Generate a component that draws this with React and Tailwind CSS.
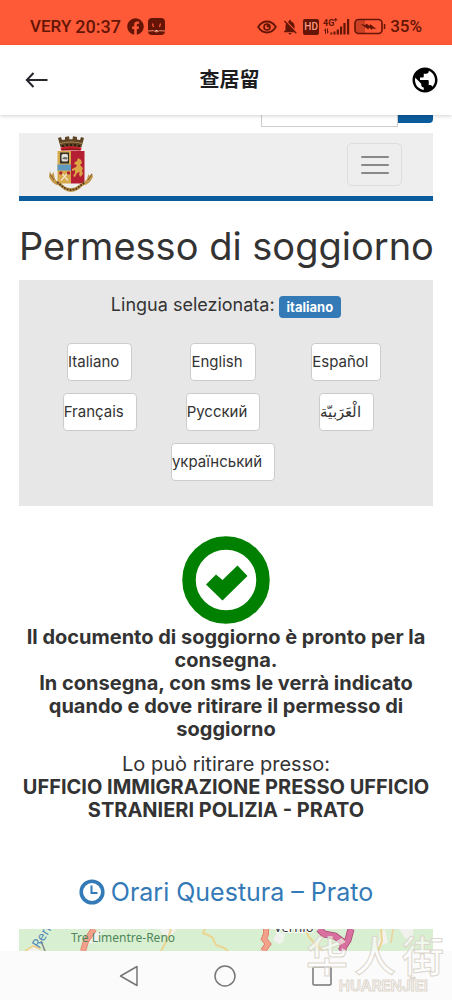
import { FaFacebook } from "react-icons/fa";
import { MdPublic, MdNotificationsOff } from "react-icons/md";

const languages = [
  { code: "it", label: "Italiano" },
  { code: "en", label: "English" },
  { code: "es", label: "Español" },
  { code: "fr", label: "Français" },
  { code: "ru", label: "Русский" },
  { code: "ar", label: "الْعَرَبيّة" },
  { code: "uk", label: "український", wide: true },
];

function StatusBar() {
  return (
    <div className="flex h-[45px] shrink-0 items-center justify-between bg-[#ff5a37] pt-2 pr-[30px] pl-[30px] font-[Roboto,sans-serif] font-medium text-[#641505]">
      <div className="flex items-center gap-1">
        <span className="text-[17px]">VERY</span>
        <span className="text-lg">20:37</span>
        <FaFacebook className="ml-0.5 h-[17px] w-[17px]" />
        <svg viewBox="0 0 17 17" className="h-[17px] w-[17px]">
          <rect width="17" height="17" rx="4" fill="currentColor" />
          <path d="M4.500 5.500l1 3.500M12.500 5.500l-1 3.500" stroke="#ff5a37" strokeWidth="1.200" />
          <path d="M0 13l5.500-.3 3 1.300 3-1.300 5.500.3" stroke="#ff8b70" strokeWidth="1" fill="none" />
          <path d="M7 12h3l-1.500 1.500z" fill="#ffd8cc" />
        </svg>
      </div>
      <div className="flex items-center gap-1">
        <svg viewBox="0 0 20 14" className="h-[14px] w-[20px]" fill="none" stroke="currentColor">
          <path d="M1.200 7C3.500 3.200 6.500 1.500 10 1.500S16.500 3.200 18.800 7C16.500 10.800 13.500 12.500 10 12.500S3.500 10.800 1.200 7z" strokeWidth="1.800" />
          <circle cx="10" cy="7" r="3" strokeWidth="1.600" />
          <circle cx="11" cy="6" r="1.500" fill="currentColor" stroke="none" />
        </svg>
        <MdNotificationsOff className="h-[18px] w-[18px]" />
        <span className="flex h-4 w-4 items-center justify-center rounded-xs bg-[#641505] text-[10px] text-[#ff9a82]">HD</span>
        <svg viewBox="0 0 27 17" className="h-[17px] w-[27px]" fill="currentColor">
          <text x="0" y="7.500" fontSize="9" fontWeight="700" textAnchor="start">4G</text>
          <path d="M12.200 0h1v1.200h1.200v1h-1.200v1.200h-1V2.200H11v-1h1.200z" />
          <path d="M1 12.500l2-2.500v6H2v-3zM4 10.500h1v3h1l-2 2.500zM7.500 14.500h1.800v2H7.500zM10.500 13.500h2v3h-2zM13.700 11.500h2.200v5h-2.200zM17 8.500h2.200v8H17zM20.400 5h2.200v11.500h-2.200zM24 1h2.200v15.500H24z" />
        </svg>
        <svg viewBox="0 0 32 17" className="h-[17px] w-[32px]">
          <path d="M4 2h7v13H4a3 3 0 01-3-3V5a3 3 0 013-3z" fill="#cf4124" />
          <rect x="1" y="1.500" width="27" height="14" rx="3.500" fill="none" stroke="currentColor" strokeWidth="1.600" />
          <path d="M29.800 6h1.500v5h-1.500z" fill="currentColor" />
          <path d="M6.500 6l5 1 1-1.500 3 2.500.5-2 6.500 5-4-.5-.5 1.500-3-2.500-.5 2z" fill="currentColor" />
        </svg>
        <span className="text-[17px]">35%</span>
      </div>
    </div>
  );
}

function TitleBar() {
  return (
    <header className="relative z-10 flex h-[70px] shrink-0 items-center justify-between bg-white pr-3 pl-[25px] shadow-[0_1px_4px_rgba(0,0,0,0.18)]">
      <button type="button" aria-label="Back" className="text-[#26262c]">
        <svg viewBox="0 0 24 18" className="h-[18px] w-6" fill="none" stroke="currentColor" strokeWidth="2">
          <path d="M22.500 9H2M8.500 2L1.800 9l6.700 7" />
        </svg>
      </button>
      <h1 className="text-xl font-bold text-[#1d1d1f]">查居留</h1>
      <button type="button" aria-label="Language" className="text-black">
        <MdPublic className="h-[30px] w-[30px]" />
      </button>
    </header>
  );
}

function Crest() {
  return (
    <svg viewBox="0 0 46 58" className="h-[58px] w-[46px]" role="img" aria-label="Polizia di Stato">
      {/* Mural crown */}
      <path d="M10 2l3-1 1 3 3-.5V1l4-.8.500 3h3l.5-3 4 .8v2.500l3 .5 1-3 3 1-2.500 9H12.500z" fill="#5f4426" />
      <path d="M12 7.500q11-3 22.500 0" stroke="#b09050" strokeWidth="1.200" fill="none" />
      <path d="M15 9v2M19 8v2.500M23 8v2.500M27 8v2.500M31 9v2" stroke="#21160d" strokeWidth="1.500" />
      <path d="M12.500 11.500q10.500-2.500 21 0l-.5 3H13z" fill="#c3202b" />
      <path d="M14 13.800q9-1.500 18 0" stroke="#7a1518" strokeWidth="1" fill="none" />
      {/* Shield */}
      <path d="M9.500 15H23v32.500H11.500q-2 0-2-2z" fill="#d8a94c" />
      <path d="M23 15h13.500v30.500q0 2-2 2H23z" fill="#b51f33" />
      <path d="M9.500 28.500H23v6H9.500z" fill="#5f9bc0" />
      <rect x="12" y="16.500" width="9" height="11" fill="#33302a" />
      <rect x="13.500" y="18" width="6.500" height="7.500" rx="1.500" fill="#e4e0d5" />
      <path d="M14 23l2-2 4 .5-1 2z" fill="#6a6a68" />
      <path d="M12 36l2.500 2L20 44.500M21.500 36L19 38l-6 6.500" stroke="#efe4c4" strokeWidth="1.300" fill="none" />
      <circle cx="12.800" cy="37" r="1.700" fill="#a8272a" />
      <circle cx="20.500" cy="37" r="1.700" fill="#a8272a" />
      <path d="M30 22l3 2 1 3-2 2 3 3-1 3 1 3-3 3-1-3 1-2-3 1-2 4-2-1 2-3v-3l-3 1v-2l4-2 1-2-3-1 1-2 2-1z" fill="#dda544" />
      {/* Ribbon */}
      <path d="M1 41q4 8 10 8.500Q17 56 23 56t12-6.500q6-.5 10-8.500l-1-4-2.500 3-1-2-1.500 5q-3 4-6 4-4 5-10 5t-10-5q-3 0-6-4L5.500 36l-2 3L2 35z" fill="#c59a4c" />
      <path d="M9 46l5 4 4 3 5 1 5-1 4-3 5-4" stroke="#59411f" strokeWidth="2" strokeDasharray="2 1" fill="none" />
      <path d="M2 38l4 6M44 38l-4 6" stroke="#7a5b2c" strokeWidth="1" />
    </svg>
  );
}

function Navbar() {
  return (
    <div className="mt-1.5 flex h-[68px] items-center justify-between border-b-[5px] border-[#0b5c9c] bg-[#eeeeee] pr-[31px] pl-[29px]">
      <a href="#home">
        <Crest />
      </a>
      <button
        type="button"
        aria-label="Menu"
        className="flex h-[43px] w-[55px] flex-col items-center justify-center gap-[6px] rounded-[5px] border border-[#dddddd]"
      >
        <span className="h-0.5 w-7 rounded-sm bg-[#888888]" />
        <span className="h-0.5 w-7 rounded-sm bg-[#888888]" />
        <span className="h-0.5 w-7 rounded-sm bg-[#888888]" />
      </button>
    </div>
  );
}

function LanguagePanel() {
  return (
    <section className="mt-3 bg-[#e7e7e7] pt-3 pr-[25px] pb-[25px] pl-[19px]">
      <p className="flex items-center justify-center gap-1 pl-1.5 text-lg leading-6">
        Lingua selezionata:
        <span className="mt-1 rounded bg-[#337ab7] px-2 text-[13px] leading-[22px] font-bold text-white">italiano</span>
      </p>
      <div className="mt-[25px] grid grid-cols-3 justify-items-center gap-y-3">
        {languages.map((lang) => (
          <button
            key={lang.code}
            type="button"
            lang={lang.code}
            className={`h-[38px] rounded border border-[#cccccc] bg-white pr-3 text-[15px] ${lang.wide ? "col-span-3" : ""}`}
          >
            {lang.label}
          </button>
        ))}
      </div>
    </section>
  );
}

function PermitStatus() {
  return (
    <section className="mt-[30px] text-center text-xl leading-[23px]">
      <svg viewBox="0 0 88 88" className="mx-auto h-[88px] w-[88px]" role="img" aria-label="Pronto">
        <circle cx="44" cy="44" r="37" fill="none" stroke="#008000" strokeWidth="13.500" />
        <path d="M24 48.500l10-10 6.500 5.500 15-14.500 10 10.500-25 24.500z" fill="#008000" />
      </svg>
      <p className="mt-0.5 font-bold">
        Il documento di soggiorno è pronto per la consegna.
        <br />
        In consegna, con sms le verrà indicato quando e dove ritirare il permesso di soggiorno
      </p>
      <p className="mt-3">
        Lo può ritirare presso:
        <br />
        <strong>UFFICIO IMMIGRAZIONE PRESSO UFFICIO STRANIERI POLIZIA - PRATO</strong>
      </p>
    </section>
  );
}

function OfficeMap() {
  return (
    <svg viewBox="0 0 414 44" className="mt-[21px] w-full bg-[#d8f0d1]" role="img" aria-label="Mappa">
      <path d="M85 0l-6 10 4 1-7 3-8 0 6-9zM140 0h18l-8 9-6-3zM22 22l-8-6-8 6zM258 3l8 2-2 8-4 2-6-4zM360 4l6-4 3 14-12 4 4-9zM380 0h14v11l-8-2z" fill="#f1f1ee" />
      <path d="M6 22l8-5 8 3M152 0l-3 9-7 13M186 0l-2 4 9 4 4 8 8 3 4 3M286 0l4 8 8 9 6 5M362 0l1 12-4 10" stroke="#ecd491" strokeWidth="2" fill="none" />
      <path d="M374 0l-2 14" stroke="#efcf9b" strokeWidth="1.500" />
      <path d="M22 12l4 10" stroke="#85848b" strokeWidth="1.500" />
      <path d="M75 0l-8 12-3 10" stroke="#df7763" strokeWidth="6" fill="none" />
      <path d="M75 0l-8 12-3 10" stroke="#f2a18c" strokeWidth="4.500" fill="none" />
      <path d="M247 0v5l-2 5 4 5-5 7" stroke="#df7763" strokeWidth="6" fill="none" />
      <path d="M247 0v5l-2 5 4 5-5 7" stroke="#f2a18c" strokeWidth="4.500" fill="none" />
      <path d="M300 0l5 5 11 2 8 6 0 9M332 0l-3 11-7 11" stroke="#a94674" strokeWidth="7" fill="none" />
      <path d="M300 0l5 5 11 2 8 6 0 9M332 0l-3 11-7 11" stroke="#d8719f" strokeWidth="5.500" fill="none" />
      <g fontFamily="'Noto Sans', sans-serif">
        <text x="52" y="13" fontSize="12" fill="#4e865a">Tre Limentre-Reno</text>
        <text x="20" y="20" fontSize="13" fill="#4f87b8" transform="rotate(-58 20 20)">Reno</text>
        <text x="255" y="3" fontSize="13" fill="#333333" stroke="#ffffff" strokeWidth="2" paintOrder="stroke">Vernio</text>
      </g>
    </svg>
  );
}

function SystemNav() {
  return (
    <nav className="relative flex h-[49px] shrink-0 items-center justify-between bg-[#fbfbfb] px-[119px] text-[#77777a]">
      <button type="button" aria-label="Indietro">
        <svg viewBox="0 0 20 22" className="h-[22px] w-5" fill="none" stroke="currentColor" strokeWidth="1.500" strokeLinejoin="round">
          <path d="M18 1.500v19L1.500 11z" />
        </svg>
      </button>
      <button type="button" aria-label="Home">
        <svg viewBox="0 0 22 22" className="h-[22px] w-[22px]" fill="none" stroke="currentColor" strokeWidth="1.500">
          <circle cx="11" cy="11" r="10" />
        </svg>
      </button>
      <button type="button" aria-label="Recenti">
        <svg viewBox="0 0 22 22" className="h-[22px] w-[22px]" fill="none" stroke="currentColor" strokeWidth="1.500">
          <rect x="2" y="2" width="18" height="18" rx="1" />
        </svg>
      </button>
      {/* Watermark */}
      <div className="pointer-events-none absolute right-2 bottom-[7px] flex flex-col items-end text-white/60">
        <span className="flex gap-1.5 text-[42px] leading-[42px] font-medium [-webkit-text-stroke:1px_#ddd6cc]">
          <span>华</span>
          <span>人</span>
          <span>街</span>
        </span>
        <span className="mr-4 text-[15px] leading-[15px] font-semibold [-webkit-text-stroke:1px_#ddd6cc]">HUARENJÏEI</span>
      </div>
    </nav>
  );
}

export default function App() {
  return (
    <div className="flex h-screen flex-col overflow-hidden bg-white font-[Inter,'Noto_Sans_CJK_SC',sans-serif] text-[#333333]">
      <StatusBar />
      <TitleBar />
      <main className="min-h-0 flex-1 overflow-hidden px-[19px]">
        <form className="flex h-3 items-start justify-end">
          <input type="text" aria-label="Cerca" className="h-3 w-[137px] border border-t-0 border-[#cccccc]" />
          <button type="submit" aria-label="Cerca" className="h-2 w-[35px] rounded-br bg-[#0b5c9c]" />
        </form>
        <Navbar />
        <h2 className="mt-6 text-center text-[38px] leading-[43px] whitespace-nowrap">Permesso di soggiorno</h2>
        <LanguagePanel />
        <PermitStatus />
        <a href="#orari" className="mt-[54px] flex items-center justify-center gap-1.5 text-[25px] leading-[32px] text-[#337ab7]">
          <svg viewBox="0 0 26 26" className="h-[26px] w-[26px]" fill="none" stroke="currentColor">
            <circle cx="13" cy="13" r="10.800" strokeWidth="3.600" />
            <path d="M12.500 6.500v7.500h6" strokeWidth="2" />
          </svg>
          Orari Questura – Prato
        </a>
        <OfficeMap />
      </main>
      <SystemNav />
    </div>
  );
}
